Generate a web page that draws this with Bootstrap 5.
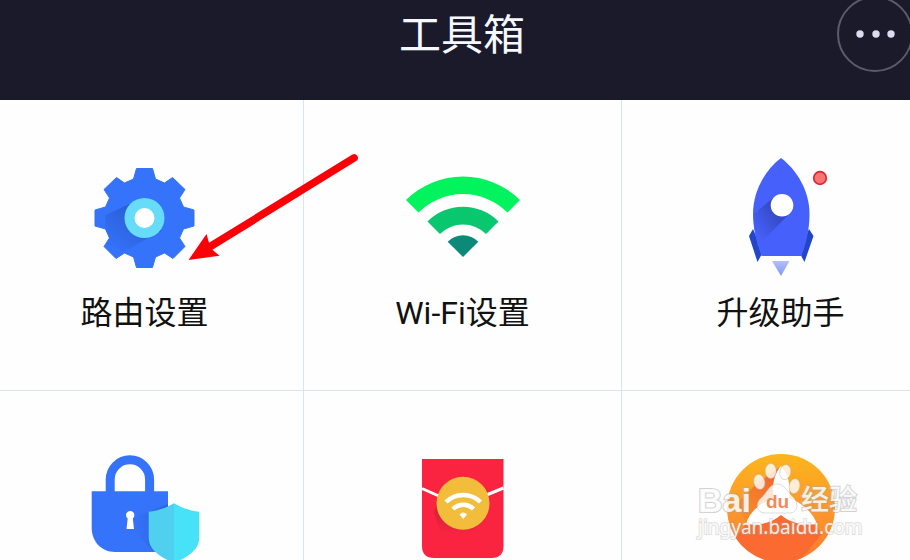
<!DOCTYPE html>
<html lang="zh-CN">
<head>
<meta charset="utf-8">
<meta name="viewport" content="width=device-width, initial-scale=1">
<title>工具箱</title>
<link href="https://cdn.jsdelivr.net/npm/bootstrap@5.3.0/dist/css/bootstrap.min.css" rel="stylesheet">
<style>
  body { font-family: "Noto Sans CJK SC", sans-serif; background: #fefefe; }
  /* The tool box is a little wider than the window and runs off both sides */
  .toolbox { margin-left: -15px; margin-right: -29px; }
  .topbar { height: 100px; background: #1a1a2b; color: #f6f8ff; }
  .topbar h1 { font-size: 42px; line-height: 64px; }
  .more-btn { width: 76px; height: 76px; top: -4px; right: 26px; border: 2px solid #5c5b6b; background: #1a1a2b; }
  .tile { height: 291px; padding-top: 58px; background: #fefefe; color: #111; border: 0 solid #dbe6ec; border-width: 0 0 1px 1px; }
  .tile svg { width: 120px; height: 120px; }
  .tile-label { font-family: Roboto, "Noto Sans CJK SC", sans-serif; font-size: 32px; line-height: 48px; margin-top: 11px; }
  .pointer-arrow { left: 203px; top: 150px; width: 160px; height: 115px; pointer-events: none; }
  .site-stamp { left: 709px; top: 455px; width: 170px; height: 90px; pointer-events: none; }
</style>
<script src="https://cdn.jsdelivr.net/npm/bootstrap@5.3.0/dist/js/bootstrap.bundle.min.js"></script>
</head>
<body>
<div class="vh-100 overflow-hidden">
  <div class="toolbox position-relative">
    <header class="topbar position-relative text-center">
      <h1 class="fw-normal m-0">工具箱</h1>
      <button type="button" class="more-btn position-absolute rounded-circle p-0 d-flex align-items-center justify-content-center" aria-label="更多">
        <svg width="40" height="8" viewBox="0 0 40 8" fill="#dcdcf0"><circle cx="5" cy="4" r="3.700"/><circle cx="21" cy="4" r="3.700"/><circle cx="36" cy="4" r="3.700"/></svg>
      </button>
    </header>

    <main class="row row-cols-3 g-0">
      <button type="button" class="col tile d-flex flex-column align-items-center">
        <svg viewBox="84 158 120 120" aria-hidden="true">
          <defs>
            <linearGradient id="gearShade" x1="1" y1="0" x2="0" y2="1"><stop offset=".3" stop-color="#2a5fd4"/><stop offset=".9" stop-color="#3471fa"/></linearGradient>
          </defs>
          <g transform="translate(144.500 218)">
            <path fill="#3573fb" stroke="#3573fb" stroke-linejoin="round" d="M-8-49.500H8L11-39 20-35 28-40.500 40.500-28.500 35-20 39-11 49.500-8V8L39 11 35 20 40.500 28.500 28.500 40.500 20 35 11 39 8 49.500H-8L-11 39-20 35-28.500 40.500-40.500 28.500-35 20-39 11-49.500 8V-8L-39-11-35-20-40.500-28.500-28-40.500-20-35-11-39Z"/>
            <path fill="url(#gearShade)" d="M-15-14-39-3V11L-35 20-38 26-20 33 17 13Z"/>
            <circle r="20" fill="#66dcf8"/><circle r="10" fill="#fff"/>
          </g>
        </svg>
        <span class="tile-label">路由设置</span>
      </button>

      <button type="button" class="col tile d-flex flex-column align-items-center">
        <svg viewBox="402 158 120 120" aria-hidden="true">
          <g transform="translate(463 257)">
            <path fill="#03f35f" d="M-57-57A81 81 0 0 1 57-57L44.500-44.500A63 63 0 0 0-44.500-44.500Z"/>
            <path fill="#08c76f" d="M-35.500-35.500A50 50 0 0 1 35.500-35.500L23-23A32.500 32.500 0 0 0-23-23Z"/>
            <path fill="#0b8a77" d="M0 0-15.300-15.300A21.600 21.600 0 0 1 15.300-15.300Z"/>
          </g>
        </svg>
        <span class="tile-label">Wi-Fi设置</span>
      </button>

      <button type="button" class="col tile d-flex flex-column align-items-center">
        <svg viewBox="720 158 120 120" aria-hidden="true">
          <defs>
            <linearGradient id="rocketShade" x1="1" y1="0" x2="0" y2="1"><stop offset=".3" stop-color="#3549c4"/><stop offset=".85" stop-color="#4661fb"/></linearGradient>
            <linearGradient id="flame" x1="0" y1="0" x2="0" y2="1"><stop offset="0" stop-color="#b3c0fa"/><stop offset="1" stop-color="#8495f0"/></linearGradient>
          </defs>
          <path fill="#2346c8" d="M753 229 749 236 757.500 262 763 252ZM809 229 813.500 236 804.500 262 799 252Z"/>
          <path fill="#4661fb" d="M781 158C765 170 753 191 753 214C753 229 757 243 761.500 256H801.500C806 243 809.500 230 809.500 214C809.500 191 797 170 781 158Z"/>
          <path fill="url(#rocketShade)" d="M774 197 754 214C753 225 756 237 758 246L788 215Z"/>
          <circle cx="782" cy="205.300" r="11.300" fill="#fff"/>
          <path fill="url(#flame)" d="M772 261H789.500L781 276Z"/>
          <circle cx="820" cy="178" r="6.300" fill="#f87575" stroke="#d92a36" stroke-width="1.700"/>
        </svg>
        <span class="tile-label">升级助手</span>
      </button>

      <button type="button" class="col tile d-flex flex-column align-items-center" aria-label="安全">
        <svg viewBox="84 449 120 120" aria-hidden="true">
          <defs>
            <linearGradient id="lockShade" x1="0" y1="0" x2="1" y2="0"><stop offset="0" stop-color="#3573fb"/><stop offset="1" stop-color="#2c63dc"/></linearGradient>
          </defs>
          <path fill="none" stroke="#3573fb" stroke-width="9" d="M110.200 494V479.500A19.700 19.700 0 0 1 149.600 479.500V494"/>
          <path fill="#3573fb" d="M91.700 491.300H168V552H115C101 552 91.700 541 91.700 528Z"/>
          <path fill="url(#lockShade)" d="M133 518 168 504V550H152L133 529Z"/>
          <path fill="#fff" d="M126 515.500A4.200 4.200 0 1 1 132.800 518.500L134 529H126.500L127.700 518.500A4 4 0 0 1 126 515.500Z"/>
          <path fill="#4fd0ef" d="M174 503.300C166 508 157 511 148.700 511.700V538C149 550 160 557 174 563Z"/>
          <path fill="#47e2f8" d="M174 503.300C182 508 191 511 199.300 511.700V538C199 550 188 557 174 563Z"/>
        </svg>
      </button>

      <button type="button" class="col tile d-flex flex-column align-items-center" aria-label="Wi-Fi红包">
        <svg viewBox="402 449 120 120" aria-hidden="true">
          <defs>
            <linearGradient id="packetShade" x1="0" y1="0" x2="0" y2="1"><stop offset=".4" stop-color="#d8213a"/><stop offset="1" stop-color="#fb2440"/></linearGradient>
          </defs>
          <path fill="#fb2440" d="M422 459H503.500V546Q503.500 558 491.500 558H434Q422 558 422 546Z"/>
          <path fill="url(#packetShade)" d="M440 492 434 513 440 530 466 537 484 520Z"/>
          <path fill="none" stroke="#fff" stroke-width="3" d="M422 488.500 441 497M503.500 488 484 496"/>
          <circle cx="463" cy="503.300" r="26.500" fill="#f3bd3c"/>
          <g fill="none" stroke="#fff" stroke-width="4.500">
            <path d="M446 502A24.500 24.500 0 0 1 480.500 502"/>
            <path d="M453 509A14.500 14.500 0 0 1 473.500 509"/>
          </g>
          <path fill="#fff" d="M463.200 519 459.500 514.500Q463.200 510.500 467 514.500Z"/>
        </svg>
      </button>

      <button type="button" class="col tile d-flex flex-column align-items-center" aria-label="加速">
        <svg viewBox="720 449 120 120" aria-hidden="true">
          <defs>
            <linearGradient id="fanDisc" x1="0" y1="0" x2="0" y2="1"><stop offset="0" stop-color="#fcb51c"/><stop offset=".5" stop-color="#fd982a"/><stop offset="1" stop-color="#fd7a30"/></linearGradient>
            <linearGradient id="fanShade" x1="1" y1="0" x2="0" y2="1"><stop offset="0" stop-color="#f0602a"/><stop offset="1" stop-color="#fb922a"/></linearGradient>
          </defs>
          <circle cx="781" cy="508" r="54" fill="url(#fanDisc)"/>
          <path fill="url(#fanShade)" d="M779 468 756 484 737 504 746 522 781 515Z"/>
          <path fill="#fb6b31" d="M747 523 781 514 814 523 822 534 802 558A54 54 0 0 1 735 537Z"/>
          <path fill="#fff" d="M781 466C788 473 791 486 789 498C803 503 813 513 817 524C804 526 790 523 781 515C772 523 758 526 746 524C749 513 759 503 773 498C772 486 774 473 781 466Z"/>
        </svg>
      </button>
    </main>

    <svg class="pointer-arrow position-absolute" viewBox="188 150 160 115" overflow="visible" aria-hidden="true">
      <path fill="#fb0007" d="M188.500 260 206.500 234 209 242.800 352 154.800A3.700 3.700 0 0 1 356.200 161L212.400 249.800 219.500 255.700Z"/>
    </svg>

    <svg class="site-stamp position-absolute" viewBox="694 455 170 90" role="img" aria-label="Baidu经验 jingyan.baidu.com">
      <g fill="#fff" fill-opacity=".8" stroke="#b8b8b8" stroke-opacity=".5" stroke-width="1">
        <ellipse cx="759.300" cy="482" rx="5.500" ry="7.500" transform="rotate(-12 759 482)"/>
        <ellipse cx="770.700" cy="471" rx="5.500" ry="7.500"/>
        <ellipse cx="785.300" cy="472" rx="5.500" ry="7.500" transform="rotate(12 785 472)"/>
        <ellipse cx="794.500" cy="486" rx="5.300" ry="7.500" transform="rotate(10 794 486)"/>
        <path d="M777 484C784 484 787 491 792 496C799 502 799 513 789 513H765C756 513 755 503 761 498C767 493 769 484 777 484Z"/>
      </g>
      <g fill="#fff" fill-opacity=".85" stroke="#a8a8a8" stroke-opacity=".5" stroke-width="2" paint-order="stroke">
        <text x="698" y="512" font-family="Liberation Sans, sans-serif" font-weight="700" font-size="34">Bai</text>
        <text x="801" y="510" font-family="Noto Sans CJK SC, sans-serif" font-weight="500" font-size="28">经验</text>
        <text x="698" y="534" font-family="Noto Sans, sans-serif" font-size="19" stroke-opacity=".35">jingyan.baidu.com</text>
      </g>
      <text x="766" y="508" font-family="Liberation Sans, sans-serif" font-weight="700" font-size="19" fill="#ef8a5c">du</text>
    </svg>
  </div>
</div>
</body>
</html>
